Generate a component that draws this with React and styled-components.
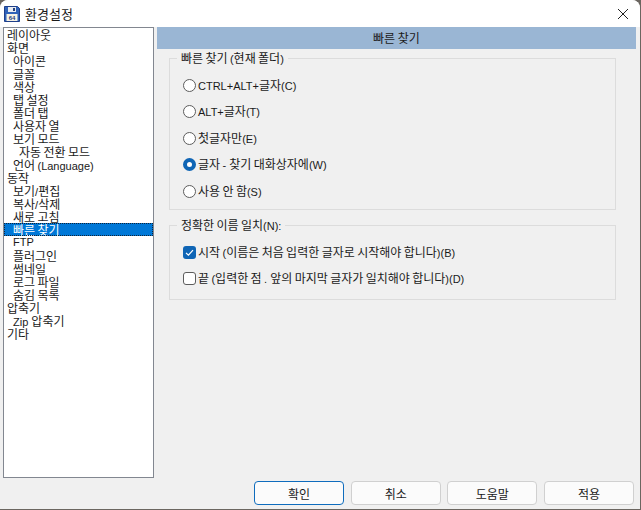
import React from 'react';
import styled, { createGlobalStyle } from 'styled-components';

const treeItems = [
    ['레이아웃', 0],
    ['화면', 0],
    ['아이콘', 1],
    ['글꼴', 1],
    ['색상', 1],
    ['탭 설정', 1],
    ['폴더 탭', 1],
    ['사용자 열', 1],
    ['보기 모드', 1],
    ['자동 전환 모드', 2],
    ['언어 (Language)', 1],
    ['동작', 0],
    ['보기/편집', 1],
    ['복사/삭제', 1],
    ['새로 고침', 1],
    ['빠른 찾기', 1, true],
    ['FTP', 1],
    ['플러그인', 1],
    ['썸네일', 1],
    ['로그 파일', 1],
    ['숨김 목록', 1],
    ['압축기', 0],
    ['Zip 압축기', 1],
    ['기타', 0],
];

const radios = [
    ['CTRL+ALT+글자(C)', false],
    ['ALT+글자(T)', false],
    ['첫글자만(E)', false],
    ['글자 - 찾기 대화상자에(W)', true],
    ['사용 안 함(S)', false],
];

// latin runs are set smaller than hangul in the original dialog font
const Label = ({ text }) => (
    <LabelText>
        {text.split(/([가-힣][가-힣 ]*)/).filter(Boolean).map((part, idx) =>
            /[가-힣]/.test(part) ? <Hangul key={idx}>{part}</Hangul> : <span key={idx}>{part}</span>,
        )}
    </LabelText>
);

const App = () => (
    <Window>
        <GlobalStyle />
        <TitleBar>
            <AppIcon viewBox="0 0 16 16">
                <path d="M0.5 0.5h13l2 2v13H0.5z" fill="#2f62b8" stroke="#1f3f8a" strokeWidth="1" />
                <rect x="4" y="1" width="8" height="5" fill="#e8ecf2" />
                <rect x="9" y="2" width="2" height="3" fill="#27407c" />
                <rect x="2.5" y="8" width="11" height="7" fill="#f6f2e4" />
                <IconText x="8" y="14" textAnchor="middle">64</IconText>
            </AppIcon>
            <TitleText>환경설정</TitleText>
            <CloseIcon viewBox="0 0 12 12">
                <path d="M1 1l10 10M11 1L1 11" stroke="#222" strokeWidth="1" fill="none" />
            </CloseIcon>
        </TitleBar>
        <Body>
            <Tree>
                {treeItems.map(([label, depth, selected]) => (
                    <TreeRow key={label} $depth={depth} $selected={selected}>
                        <Label text={label} />
                    </TreeRow>
                ))}
            </Tree>
            <Panel>
                <PanelHeader>빠른 찾기</PanelHeader>
                <Group $height={159} $top={2} $inset={6}>
                    <Legend>
                        <Label text="빠른 찾기 (현재 폴더)" />
                    </Legend>
                    {radios.map(([label, checked]) => (
                        <RadioRow key={label}>
                            <Radio $checked={checked} />
                            <Label text={label} />
                        </RadioRow>
                    ))}
                </Group>
                <Group $height={82} $top={8} $inset={6}>
                    <Legend>
                        <Label text="정확한 이름 일치(N):" />
                    </Legend>
                    <CheckRow>
                        <Check $checked>
                            <svg viewBox="0 0 13 13" width="13" height="13">
                                <path d="M3 6.8l2.4 2.4L10 4.2" stroke="#fff" strokeWidth="1.2" fill="none" />
                            </svg>
                        </Check>
                        <Label text="시작 (이름은 처음 입력한 글자로 시작해야 합니다)(B)" />
                    </CheckRow>
                    <CheckRow>
                        <Check />
                        <Label text="끝 (입력한 점 . 앞의 마지막 글자가 일치해야 합니다)(D)" />
                    </CheckRow>
                </Group>
            </Panel>
        </Body>
        <Footer>
            <Button $primary>확인</Button>
            <Button>취소</Button>
            <Button>도움말</Button>
            <Button>적용</Button>
        </Footer>
    </Window>
);

const GlobalStyle = createGlobalStyle`
    html, body {
        margin: 0;
        padding: 0;
        background: #6b6660;
    }
`;

const Window = styled.div`
    width: 640px;
    height: 509px;
    box-sizing: border-box;
    background: #f0f0f0;
    border-radius: 8px 8px 0 0;
    overflow: hidden;
    display: flex;
    flex-direction: column;
    font-family: "Liberation Sans", "Noto Sans CJK KR", sans-serif;
    font-size: 11px;
    color: #1a1a1a;
`;

const LabelText = styled.span`
    white-space: pre;
    line-height: 13px;
`;

const Hangul = styled.span`
    font-family: "Noto Sans CJK KR", sans-serif;
    font-size: 12px;
    word-spacing: -0.3px;
`;

const TitleBar = styled.div`
    height: 27px;
    flex: none;
    background: #fff;
    display: flex;
    align-items: center;
    padding: 0 10px 0 4px;
`;

const AppIcon = styled.svg`
    width: 16px;
    height: 16px;
    margin-right: 5px;
`;

const IconText = styled.text`
    font-family: "Liberation Sans", sans-serif;
    font-size: 6px;
    font-weight: bold;
    fill: #27407c;
`;

const TitleText = styled.span`
    font-family: "Noto Sans CJK KR", sans-serif;
    font-size: 13px;
    flex: 1;
`;

const CloseIcon = styled.svg`
    width: 12px;
    height: 12px;
    margin-right: 1px;
`;

const Body = styled.div`
    flex: 1;
    display: flex;
    padding: 0 4px 0 3px;
    gap: 3px;
    min-height: 0;
`;

const Tree = styled.div`
    width: 151px;
    height: 451px;
    box-sizing: border-box;
    background: #fff;
    border: 1px solid #828790;
    padding: 0 0 1px;
    line-height: 13px;
`;

const TreeRow = styled.div`
    height: 13px;
    padding-left: ${(props) => 3 + props.$depth * 6}px;
    white-space: nowrap;
    background: ${(props) => (props.$selected ? '#0078d7' : 'transparent')};
    color: ${(props) => (props.$selected ? '#fff' : 'inherit')};
    outline: ${(props) => (props.$selected ? '1px dotted #10243a' : 'none')};
    outline-offset: -1px;
`;

const Panel = styled.div`
    flex: 1;
    display: flex;
    flex-direction: column;
`;

const PanelHeader = styled.div`
    height: 22px;
    line-height: 22px;
    background: #9ab6d4;
    text-align: center;
    font-family: "Noto Sans CJK KR", sans-serif;
    font-size: 12px;
`;

const Group = styled.fieldset`
    margin: ${(props) => props.$top}px 20px 0 12px;
    padding: ${(props) => props.$inset}px 0 0 13px;
    height: ${(props) => props.$height}px;
    box-sizing: border-box;
    border: 1px solid #dcdcdc;
    display: flex;
    flex-direction: column;
`;

const Legend = styled.legend`
    margin-left: -6px;
    padding: 0 4px;
    line-height: 14px;
`;

const RadioRow = styled.div`
    height: 26.5px;
    display: flex;
    align-items: center;
    gap: 2px;
`;

const Radio = styled.span`
    width: 13px;
    height: 13px;
    box-sizing: border-box;
    border-radius: 50%;
    border: ${(props) => (props.$checked ? '4px solid #0f65b5' : '1px solid #5d5d5d')};
    background: #fff;
`;

const CheckRow = styled.div`
    height: 26px;
    display: flex;
    align-items: center;
    gap: 2px;
`;

const Check = styled.span`
    width: 13px;
    height: 13px;
    box-sizing: border-box;
    border-radius: 3px;
    border: ${(props) => (props.$checked ? 'none' : '1px solid #5d5d5d')};
    background: ${(props) => (props.$checked ? '#0f65b5' : '#fff')};
    display: flex;
`;

const Footer = styled.div`
    height: 28px;
    flex: none;
    display: flex;
    justify-content: flex-end;
    gap: 6.67px;
    padding: 0 6px 4px 0;
    box-sizing: border-box;
`;

const Button = styled.button`
    width: 90px;
    height: 24px;
    padding: 0;
    box-sizing: border-box;
    background: #fbfbfb;
    border: 1px solid ${(props) => (props.$primary ? '#0f6cbd' : '#d0d0d0')};
    border-radius: 4px;
    font-family: "Noto Sans CJK KR", sans-serif;
    font-size: 12px;
    color: #1a1a1a;
`;

export default App;
